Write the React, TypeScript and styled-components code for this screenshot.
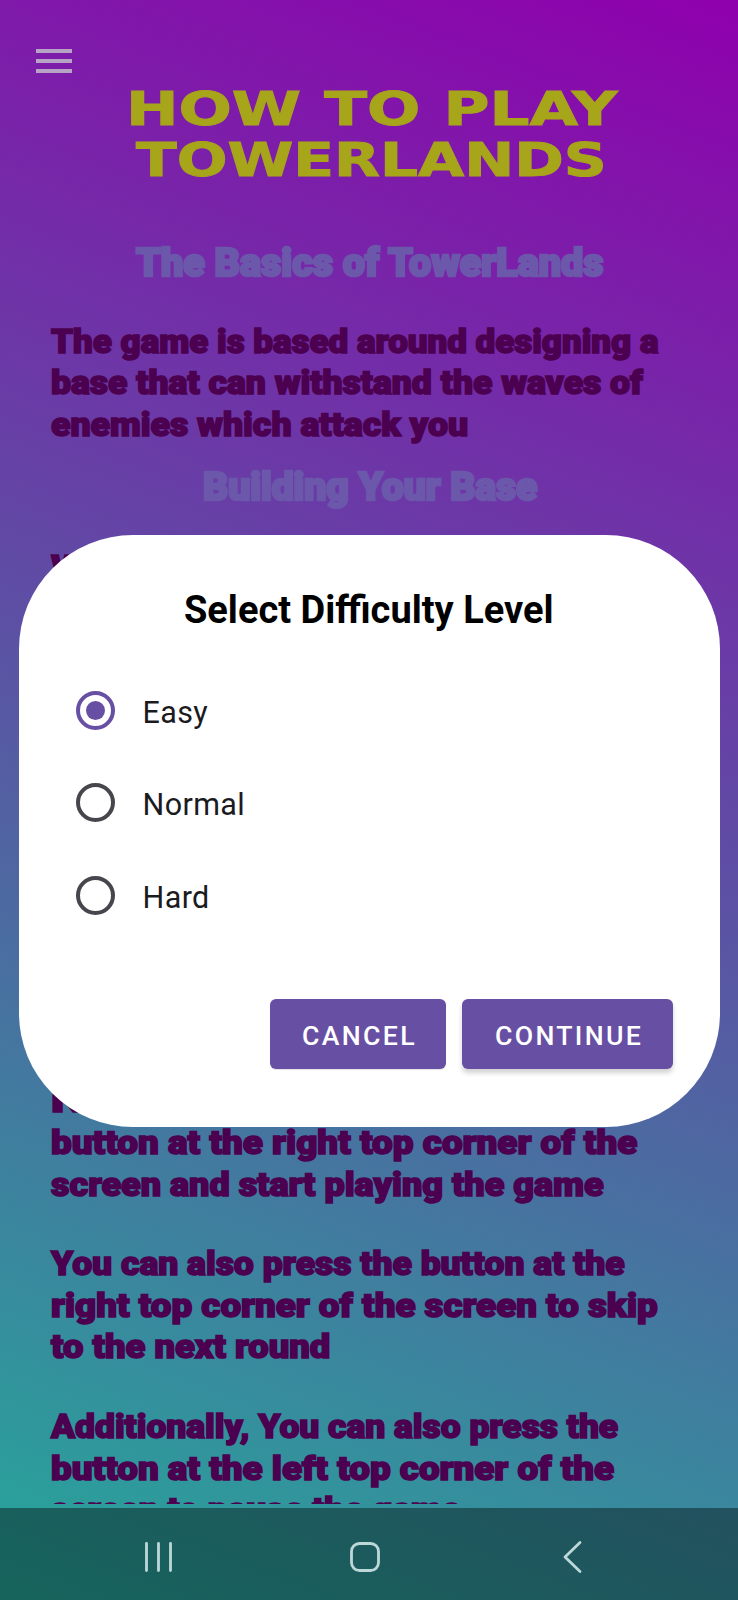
import React, { useLayoutEffect, useRef, useState } from 'react';
import styled, { createGlobalStyle } from 'styled-components';

const GlobalStyle = createGlobalStyle`
  * { box-sizing: border-box; }
  body { margin: 0; }
`;

const Screen = styled.div`
  position: relative;
  display: flex;
  flex-direction: column;
  width: 738px;
  height: 1600px;
  overflow: hidden;
  background: linear-gradient(201deg, #8f00ad, #25a89a);
`;

const Header = styled.header`
  height: 80px;
  padding: 49px 0 0 36px;
`;

const MenuButton = styled.button`
  display: flex;
  flex-direction: column;
  gap: 6px;
  width: 36px;
  padding: 0;
  border: 0;
  background: none;
`;

const MenuBar = styled.span`
  height: 4px;
  background: #b6a3c6;
`;

const Content = styled.main`
  height: 1423.5px;
  overflow: hidden;
`;

const Title = styled.h1`
  display: flex;
  flex-direction: column;
  align-items: center;
  margin: 0 0 55px;
  padding: 4px 0 0 4px;
  font: 700 46px/51px "DejaVu Sans", sans-serif;
  color: #a7a51a;
  word-spacing: 1px;
  -webkit-text-stroke: 1px #a7a51a;
`;

const Heading = styled.h2<{ $top?: number }>`
  display: flex;
  justify-content: center;
  margin: ${(p) => p.$top ?? 0}px 0 0;
  padding-left: 2px;
  font: 900 39px/44px Roboto, sans-serif;
  color: #6c58ab;
  -webkit-text-stroke: 2.5px #6c58ab;
`;

const Paragraph = styled.p<{ $top: number }>`
  margin: ${(p) => p.$top}px 0 0;
  padding-left: 50.5px;
  font: 900 33px/41.7px Roboto, sans-serif;
  color: #4b0050;
  -webkit-text-stroke: 1.6px #4b0050;
`;

const LineBox = styled.span`
  display: block;
  white-space: nowrap;
`;

const LineText = styled.span`
  display: inline-block;
  transform-origin: 0 50%;
`;

/* Stretches one line of display type to a set width. */
function Line({ width, children }: { width: number; children: string }) {
  const ref = useRef<HTMLSpanElement>(null);
  const [scale, setScale] = useState(1);
  useLayoutEffect(() => {
    if (ref.current) setScale(width / ref.current.offsetWidth);
  }, [width]);
  return (
    <LineBox style={{ width }}>
      <LineText ref={ref} style={{ transform: `scaleX(${scale})` }}>{children}</LineText>
    </LineBox>
  );
}

const DialogLayer = styled.div`
  position: absolute;
  inset: 535px 18.5px auto;
`;

const Dialog = styled.section`
  height: 592px;
  padding: 53px 46.5px 0 57px;
  border-radius: 114px;
  background: #fff;
  font-family: Roboto, sans-serif;
`;

const DialogTitle = styled.h2`
  margin: 0 11px 0 0;
  text-align: center;
  font-size: 38px;
  font-weight: 700;
  line-height: 44px;
  color: #000;
`;

const Options = styled.div`
  display: flex;
  flex-direction: column;
  margin-top: 32.5px;
`;

const Option = styled.label`
  display: flex;
  align-items: center;
  gap: 28px;
  height: 92.3px;
  color: #1b1b1f;
  font-size: 30.5px;
  letter-spacing: 0.4px;
`;

const Radio = styled.span<{ $checked?: boolean }>`
  display: grid;
  place-items: center;
  width: 39px;
  height: 39px;
  border: 4px solid ${(p) => (p.$checked ? '#6750a4' : '#47464c')};
  border-radius: 50%;
  &::after {
    content: '';
    width: 19px;
    height: 19px;
    border-radius: 50%;
    background: ${(p) => (p.$checked ? '#6750a4' : 'transparent')};
  }
`;

const OptionText = styled.span`
  padding-top: 4px;
`;

const Actions = styled.div`
  display: flex;
  justify-content: flex-end;
  gap: 16px;
  margin-top: 58px;
`;

const ActionButton = styled.button<{ $width: number; $raised?: boolean }>`
  width: ${(p) => p.$width}px;
  height: 70px;
  padding: 3px 0 0 3px;
  border: 0;
  border-radius: 6px;
  background: #674fa3;
  color: #fff;
  font: 500 26.7px/32px Roboto, sans-serif;
  letter-spacing: 2.3px;
  box-shadow: ${(p) => (p.$raised ? '0 4px 5px rgba(0,0,0,.18)' : '0 1px 1px rgba(0,0,0,.12)')};
`;

const NavBar = styled.nav`
  display: flex;
  align-items: center;
  justify-content: space-between;
  height: 92px;
  margin-top: auto;
  padding: 6px 149px 0 138px;
  background: rgba(0, 0, 0, 0.4);
`;

const NavIcon = styled.svg`
  width: 41px;
  height: 40px;
  fill: none;
  stroke: #bdd8d9;
  stroke-width: 2.8;
  stroke-linecap: round;
  stroke-linejoin: round;
`;

export default function App() {
  return (
    <>
      <GlobalStyle />
      <Screen>
        <Header>
          <MenuButton aria-label="Menu"><MenuBar /><MenuBar /><MenuBar /></MenuButton>
        </Header>
        <Content>
          <Title>
            <Line width={491}>HOW TO PLAY</Line>
            <Line width={471}>TOWERLANDS</Line>
          </Title>
          <Heading><Line width={468}>The Basics of TowerLands</Line></Heading>
          <Paragraph $top={35.5}>
            <Line width={607}>The game is based around designing a</Line>
            <Line width={592}>base that can withstand the waves of</Line>
            <Line width={417}>enemies which attack you</Line>
          </Paragraph>
          <Heading $top={19.5}><Line width={334}>Building Your Base</Line></Heading>
          <Paragraph $top={38}>
            <Line width={100}>When</Line>
          </Paragraph>
          <Paragraph $top={491.5}>
            <Line width={100}>Next</Line>
            <Line width={586}>button at the right top corner of the</Line>
            <Line width={553}>screen and start playing the game</Line>
          </Paragraph>
          <Paragraph $top={37.5}>
            <Line width={574}>You can also press the button at the</Line>
            <Line width={607}>right top corner of the screen to skip</Line>
            <Line width={279}>to the next round</Line>
          </Paragraph>
          <Paragraph $top={38}>
            <Line width={567}>Additionally, You can also press the</Line>
            <Line width={563}>button at the left top corner of the</Line>
            <Line width={410}>screen to pause the game</Line>
          </Paragraph>
        </Content>
        <NavBar>
          <NavIcon viewBox="0 0 41 40"><path d="M8.5 6.5v27M20.5 6.5v27M32.5 6.5v27" /></NavIcon>
          <NavIcon viewBox="0 0 41 40"><rect x="8.5" y="6.5" width="27" height="27" rx="8" /></NavIcon>
          <NavIcon viewBox="0 0 41 40"><path d="M32 5.5 17 20l15 14.5" /></NavIcon>
        </NavBar>
        <DialogLayer>
          <Dialog role="dialog">
            <DialogTitle>Select Difficulty Level</DialogTitle>
            <Options>
              <Option><Radio $checked /><OptionText>Easy</OptionText></Option>
              <Option><Radio /><OptionText>Normal</OptionText></Option>
              <Option><Radio /><OptionText>Hard</OptionText></Option>
            </Options>
            <Actions>
              <ActionButton $width={176}>CANCEL</ActionButton>
              <ActionButton $width={211} $raised>CONTINUE</ActionButton>
            </Actions>
          </Dialog>
        </DialogLayer>
      </Screen>
    </>
  );
}
